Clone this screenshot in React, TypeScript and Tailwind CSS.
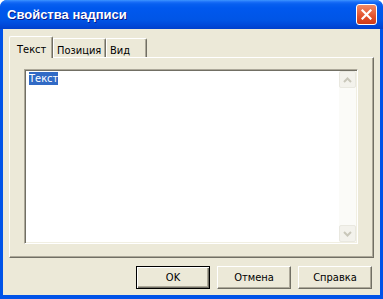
import React from 'react';

const ui = "font-['DejaVu_Sans_Condensed','Liberation_Sans',Arial,sans-serif] text-[11px] leading-[13px] text-black";

function Tab({ label, active, w }: { label: string; active?: boolean; w: string }) {
  if (active) {
    return (
      <div className={`relative z-10 -mb-[1px] h-[22px] ${w} rounded-tl-[2px] rounded-tr-[2px] border-l border-t border-r border-l-white border-t-white border-r-[#716f64] bg-[#ece9d8] pl-[7px] pt-[6px] shadow-[inset_-1px_0_#aca899]`}>
        {label}
      </div>
    );
  }
  return (
    <div className={`h-[19px] ${w} rounded-tr-[2px] border-t border-r border-t-white border-r-[#716f64] bg-[#ece9d8] pl-[4px] pt-[5px] shadow-[inset_-1px_0_#aca899,inset_1px_0_#ffffff]`}>
      {label}
    </div>
  );
}

function ScrollButton({ up }: { up?: boolean }) {
  return (
    <div className="flex h-[17px] w-[17px] items-center justify-center rounded-[2px] border border-[#e9e8e0] bg-[#f3f2ec]">
      <svg width="9" height="6" viewBox="0 0 9 6">
        <path
          d={up ? 'M1 5 L4.5 1.5 L8 5' : 'M1 1 L4.5 4.5 L8 1'}
          fill="none"
          stroke="#c9c7ba"
          strokeWidth="2"
        />
      </svg>
    </div>
  );
}

function Button({ label, isDefault }: { label: string; isDefault?: boolean }) {
  if (isDefault) {
    return (
      <div className="flex h-[23px] w-[74px] items-center justify-center border border-black bg-[#ece9d8] shadow-[inset_1px_1px_#ffffff,inset_-1px_-1px_#716f64,inset_-2px_-2px_#aca899]">
        {label}
      </div>
    );
  }
  return (
    <div className="flex h-[23px] w-[74px] items-center justify-center border border-t-white border-l-white border-r-[#716f64] border-b-[#716f64] bg-[#ece9d8] shadow-[inset_-1px_-1px_#aca899]">
      {label}
    </div>
  );
}

export default function App() {
  return (
    <div className="h-[299px] w-[383px] overflow-hidden bg-white">
      <div className="flex h-full flex-col overflow-hidden rounded-t-[7px] bg-[#0053e8]">
        {/* Title bar */}
        <div className="flex h-[29px] shrink-0 items-center bg-[linear-gradient(to_bottom,#3d95ff_0px,#1a6ef8_2px,#0860f0_4px,#0058ee_8px,#0055e6_20px,#0049da_25px,#003fcc_29px)]">
          <span className="ml-[7px] font-['Liberation_Sans',Arial,sans-serif] text-[13px] font-bold text-white [text-shadow:1px_1px_#0a1a8a]">
            Свойства надписи
          </span>
          <div className="ml-auto mr-[6px] flex h-[21px] w-[21px] items-center justify-center rounded-[3px] border border-white bg-[linear-gradient(to_bottom,#f08a66,#e2512c_60%,#cd3a18)]">
            <svg width="11" height="11" viewBox="0 0 11 11">
              <path d="M1.5 1.5 L9.5 9.5 M9.5 1.5 L1.5 9.5" stroke="#ffffff" strokeWidth="2.2" strokeLinecap="square" />
            </svg>
          </div>
        </div>

        {/* Client area */}
        <div className={`mx-[3px] mb-[4px] flex flex-1 flex-col bg-[#ece9d8] px-[6px] pt-[7px] ${ui}`}>
          <div className="flex h-[21px] items-end">
            <Tab label="Текст" active w="w-[44px]" />
            <Tab label="Позиция" w="w-[53px]" />
            <Tab label="Вид" w="w-[41px]" />
          </div>

          <div className="h-[201px] border-l border-t border-r border-b border-l-white border-t-white border-r-[#716f64] border-b-[#716f64] pl-[14px] pt-[11px] shadow-[inset_-1px_-1px_#aca899]">
            <div className="flex h-[175px] w-[334px] border border-t-[#aca899] border-l-[#aca899] border-r-white border-b-white bg-white shadow-[inset_1px_1px_#716f64,inset_-1px_-1px_#f1efe2] p-[1px]">
              <div className="flex-1 pl-[3px] pt-[1px]">
                <span className="bg-[#316ac5] text-white">Текст</span>
              </div>
              <div className="flex w-[17px] flex-col bg-[#fbfbf8]">
                <ScrollButton up />
                <div className="flex-1" />
                <ScrollButton />
              </div>
            </div>
          </div>

          <div className="mt-[8px] flex justify-end gap-[7px] pr-[2px]">
            <Button label="OK" isDefault />
            <Button label="Отмена" />
            <Button label="Справка" />
          </div>
        </div>
      </div>
    </div>
  );
}
